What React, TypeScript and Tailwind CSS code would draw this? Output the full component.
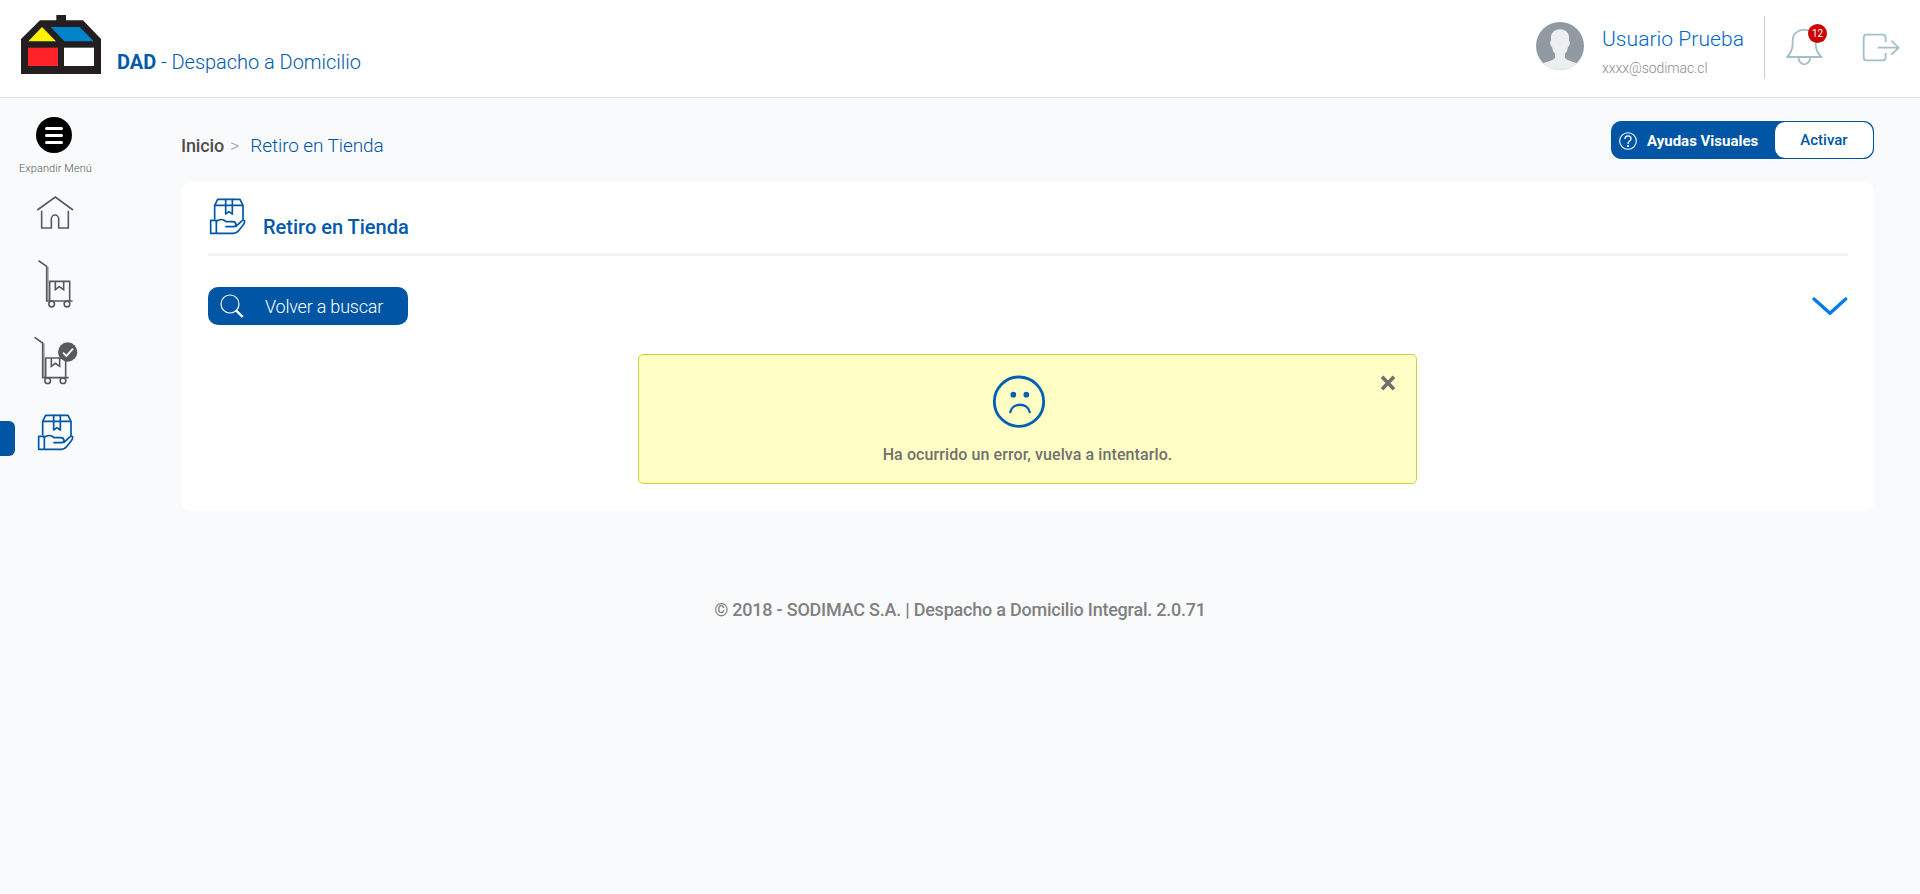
import React from "react";

function Logo() {
  return (
    <svg className="mt-[15px] h-[59px] w-20 shrink-0" viewBox="63 45 240 177">
      <path d="M63 222V117L120 61H169V45H198V61H249L303 117V222Z" fill="#231f20" />
      <path d="M85 124L126 81L168 124Z" fill="#fff200" />
      <path d="M152 81H239L281 124H193Z" fill="#0083ca" />
      <path d="M84 143H174V198H84Z" fill="#ff2329" />
      <path d="M192 143H282V198H192Z" fill="#fff" />
    </svg>
  );
}

function HandBox({ className }: { className: string }) {
  return (
    <svg className={className} viewBox="114 258 117 120" fill="none" stroke="#0056a4" strokeWidth="5" strokeLinejoin="round" strokeLinecap="round">
      <path d="M134 326V286L143 268H210L219 286V329M134 286H219" />
      <path d="M167 268V312L177 305L187 312V268" />
      <path d="M122 331H139V370H122Z" />
      <path d="M139 334C148 327 160 327 168 335H188Q197 335 198 343Q198 350 190 350H168M198 349L214 334Q221 328 224 333Q225 337 220 344L207 361Q200 370 190 370H139" />
    </svg>
  );
}

function Cart({ className, viewBox, done }: { className: string; viewBox: string; done?: boolean }) {
  return (
    <svg className={className} viewBox={viewBox} fill="none" stroke="#58595b" strokeWidth="4.8">
      <path d="M144 50V152" stroke="#a9abad" />
      <path d="M117 33L140 49V153H216" strokeLinecap="round" />
      <path d="M149 153V94H209V153M166 94V119L178 110L191 119V94" />
      <circle cx="155" cy="162" r="8.5" fill="#f9fafc" />
      <circle cx="201" cy="162" r="8.5" fill="#f9fafc" />
      {done && (
        <>
          <circle cx="215" cy="76" r="29" fill="#58595b" stroke="none" />
          <path d="M201 78L211 88L231 66" stroke="#fff" strokeWidth="5.5" />
        </>
      )}
    </svg>
  );
}

function Header() {
  return (
    <header className="flex h-[98px] items-start justify-between border-b border-[#e3e5e8] bg-white pl-[21px] pr-[19px]">
      <div className="flex items-start">
        <Logo />
        <h1 className="ml-[16px] mt-[50px] whitespace-nowrap text-[20px] font-light leading-6 tracking-[-0.03px] text-[#0059ab]">
          <span className="font-bold">DAD</span> - Despacho a Domicilio
        </h1>
      </div>
      <div className="flex items-start">
        <svg className="mt-[22px] size-12" viewBox="0 0 144 144">
          <defs>
            <clipPath id="avatar">
              <circle cx="72" cy="72" r="72" />
            </clipPath>
          </defs>
          <g clipPath="url(#avatar)">
            <path d="M0 0H144V144H0Z" fill="#9199a1" />
            <path d="M45 46C45 14 99 14 99 46V56Q104 58 101 67Q99 74 96 75Q94 88 87 96V108Q89 114 124 124V144H20V124Q55 114 57 108V96Q50 88 48 75Q45 74 43 67Q40 58 45 56Z" fill="#eceff0" />
          </g>
        </svg>
        <div className="ml-[18px] w-[162px]">
          <p className="mt-[26px] whitespace-nowrap text-[21px] font-light leading-[26px] tracking-[0.05px] text-[#0067c5]">Usuario Prueba</p>
          <p className="mt-[8px] text-[14px] font-light leading-4 tracking-[-0.08px] text-[#8d8d8d]">xxxx@sodimac.cl</p>
        </div>
        <div className="mt-4 h-[63px] w-px bg-[#cfcfcf]" />
        <div className="relative ml-[20px] mt-[28px]">
          <svg className="h-[38px] w-[38px]" viewBox="796 84 114 114" fill="none" stroke="#a3bfca" strokeWidth="5.5">
            <path d="M802 171Q818 155 819 134V122C820 78 888 78 888 122V134Q889 155 905 171Z" strokeLinejoin="round" />
            <path d="M837 174A17 19 0 0 0 871 174" />
          </svg>
          <span className="absolute left-[23px] top-[-4px] flex size-[19px] items-center justify-center rounded-full bg-[#cc0000] text-[10px] leading-none text-white">12</span>
        </div>
        <svg className="ml-[39px] mt-[33px] h-[29px] w-[39px]" viewBox="1027 99 117 87" fill="none" stroke="#a3bfca" strokeWidth="5.5">
          <path d="M1098 127V113Q1098 104 1089 104H1041Q1032 104 1032 113V172Q1032 181 1041 181H1089Q1098 181 1098 172V158M1074 143H1136M1115 122L1137 143L1115 164" />
        </svg>
      </div>
    </header>
  );
}

function Sidebar() {
  return (
    <nav className="w-[181px] shrink-0">
      <div className="ml-9 mt-[19px] flex size-9 flex-col items-center justify-center gap-[4px] rounded-full bg-black">
        <span className="h-[3px] w-[18px] rounded-full bg-white" />
        <span className="h-[3px] w-[18px] rounded-full bg-white" />
        <span className="h-[3px] w-[18px] rounded-full bg-white" />
      </div>
      <p className="mt-[9px] w-[111px] text-center text-[11px] font-light leading-[14px] tracking-[0.08px] text-[#555]">Expandir Menú</p>
      <svg className="ml-9 mt-[18px] h-9 w-[39px]" viewBox="108 282 117 108" fill="none" stroke="#58595b" strokeWidth="4.8">
        <path d="M112 330L166 291L219 330M125 332V384H154V357A11 12 0 0 1 176 357V384H205V332" />
      </svg>
      <Cart className="ml-[37px] mt-[28px] h-[51px] w-[37px]" viewBox="111 24 111 153" />
      <Cart className="ml-[33px] mt-[25px] h-[51px] w-[46px]" viewBox="111 22 138 153" done />
      <div className="mt-[27px] flex items-start">
        <span className="mt-[9px] h-[35px] w-[15px] rounded-r-[6px] bg-[#0056a4]" />
        <HandBox className="ml-[20.5px] h-10 w-[39px]" />
      </div>
    </nav>
  );
}

function HelpToggle() {
  return (
    <div className="flex h-[38px] w-[263px] rounded-[10px] border border-[#0056a4] bg-[#0056a4]">
      <div className="flex flex-1 pl-[7px] text-white">
        <svg className="mt-[10px] size-[18px]" viewBox="0 0 54 54" fill="none" stroke="currentColor" strokeWidth="3.2">
          <circle cx="27" cy="27" r="25" />
          <path d="M18 21C18 9 36 9 36 20C36 28 27 26 27 36" strokeWidth="4" />
          <circle cx="27" cy="42" r="1.5" fill="currentColor" />
        </svg>
        <span className="ml-[10px] mt-[10px] whitespace-nowrap text-[15px] font-bold leading-[18px]">Ayudas Visuales</span>
      </div>
      <button className="h-9 w-[98px] rounded-[10px] bg-white pb-[1px] text-[15px] font-medium leading-[18px] text-[#0056a4]">Activar</button>
    </div>
  );
}

function ErrorAlert() {
  return (
    <div className="ml-[430px] mt-[29px] flex h-[130px] w-[779px] flex-col rounded-[5px] border border-[#cbd144] bg-[#ffffc5]">
      <div className="flex items-start justify-between pl-[353px] pr-[20px]">
        <svg className="mt-[20px] size-[54px]" viewBox="0 0 162 162" fill="none" stroke="#0061b3" strokeWidth="8.5">
          <circle cx="81" cy="80" r="74" />
          <circle cx="64" cy="59" r="8.5" fill="#0061b3" stroke="none" />
          <circle cx="103" cy="59" r="8.5" fill="#0061b3" stroke="none" />
          <path d="M55 111C62 82 106 82 113 111" strokeWidth="7" strokeLinecap="round" />
        </svg>
        <svg className="mt-[20px] size-4" viewBox="0 0 48 48" stroke="#6f6f6f" strokeWidth="11">
          <path d="M6 5L42 43M42 5L6 43" />
        </svg>
      </div>
      <p className="mt-[16px] text-center text-[16px] font-medium leading-5 tracking-[0.09px] text-[#707070]">Ha ocurrido un error, vuelva a intentarlo.</p>
    </div>
  );
}

export default function App() {
  return (
    <div className="min-h-[894px] bg-[#f9fafc] font-['Roboto','Liberation_Sans',sans-serif]">
      <Header />
      <div className="flex h-[413px]">
        <Sidebar />
        <main className="w-[1693px]">
          <div className="flex items-start justify-between pt-[23px]">
            <div className="flex items-center pt-[13px] leading-6">
              <span className="text-[18px] font-medium tracking-[-0.15px] text-[#4e4e4e]">Inicio</span>
              <span className="ml-[6px] text-[18px] font-light text-[#a5a5a5]">&gt;</span>
              <span className="ml-[11px] text-[19px] font-light tracking-[-0.11px] text-[#0056a4]">Retiro en Tienda</span>
            </div>
            <HelpToggle />
          </div>
          <section className="mt-[23px] h-[329px] rounded-[10px] bg-white pl-[27px] pr-[26px] pt-[14px]">
            <div className="flex h-[60px] items-start border-b-[3px] border-[#f2f3f5]">
              <HandBox className="h-10 w-[39px]" />
              <h2 className="ml-4 mt-[19px] text-[20px] font-medium leading-6 text-[#0059ab]">Retiro en Tienda</h2>
            </div>
            <div className="mt-[31px] flex items-start justify-between">
              <button className="flex h-[38px] w-[200px] items-center rounded-[10px] bg-[#0056a4] pl-3 text-white">
                <svg className="size-6" viewBox="0 0 72 72" fill="none" stroke="currentColor">
                  <circle cx="30" cy="30" r="27" strokeWidth="3.5" />
                  <path d="M48 49L68 69" strokeWidth="7" />
                </svg>
                <span className="ml-[21px] mt-[2px] text-[18px] font-light leading-6 tracking-[-0.2px]">Volver a buscar</span>
              </button>
              <svg className="mt-[9px] h-5 w-[36px]" viewBox="0 0 108 60" fill="none" stroke="#007bec" strokeWidth="10" strokeLinecap="round" strokeLinejoin="round">
                <path d="M6 9L54 52L101 9" />
              </svg>
            </div>
            <ErrorAlert />
          </section>
        </main>
      </div>
      <footer className="mt-[87px] text-center text-[18px] font-medium leading-6 tracking-[-0.225px] text-[#808080]">© 2018 - SODIMAC S.A. | Despacho a Domicilio Integral. 2.0.71</footer>
    </div>
  );
}
